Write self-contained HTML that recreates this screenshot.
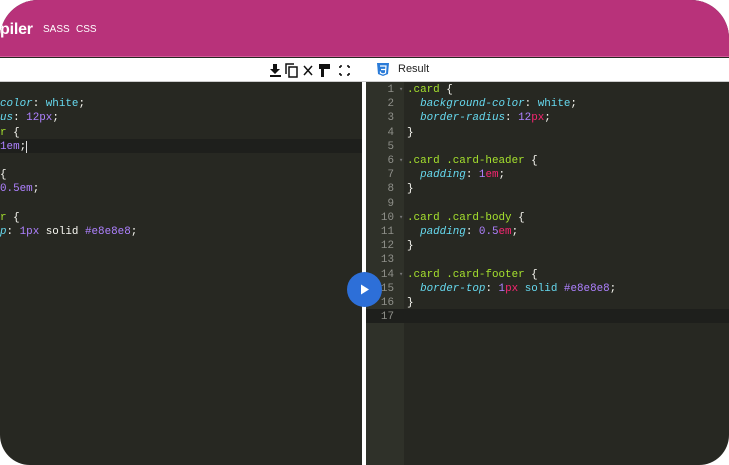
<!DOCTYPE html>
<html><head><style>
*{margin:0;padding:0;box-sizing:border-box}
html,body{width:729px;height:465px;background:#fff;overflow:hidden}
#frame{position:absolute;left:0;top:0;width:729px;height:465px;border-radius:38px 38px 30px 30px;overflow:hidden;background:#272822}
#hdr{position:absolute;left:0;top:0;width:729px;height:57px;background:#b8327a;border-bottom:1px solid #d45a9a;font-family:"Liberation Sans",sans-serif;color:#fff}
#tb{position:absolute;left:0;top:58px;width:729px;height:24px;background:#fff;border-bottom:1px solid #ccc}
.code{font-family:"Liberation Mono",monospace;font-size:10.9px;line-height:14.2px;white-space:pre;color:#f8f8f2}
.ln{position:absolute;height:14.2px}
.p{color:#66d9ef;font-style:italic}.v{color:#66d9ef}.n{color:#ae81ff}.u{color:#f92672}.s{color:#a6e22e}
#div{position:absolute;left:362px;top:82px;width:4px;height:383px;background:#fff}
#gut{position:absolute;left:366px;top:82px;width:38px;height:383px;background:#2f3129}
.g{position:absolute;right:0;width:38px;text-align:right;padding-right:10px;color:#8f908a}
.f{position:absolute;left:33px;color:#777;font-size:7px}
</style></head><body>
<div id="frame">
<div id="hdr">
 <div style="position:absolute;left:0;top:21px;font-size:16px;letter-spacing:-0.2px;font-weight:bold">piler</div>
 <div style="position:absolute;left:43px;top:24px;font-size:10px">SASS</div>
 <div style="position:absolute;left:76px;top:24px;font-size:10px">CSS</div>
</div>
<div id="tb">
 <svg style="position:absolute;left:270px;top:4px" width="82" height="16" viewBox="0 0 82 16">
  <path d="M3 2h4v5h3l-5 5-5-5h3z" fill="#111"/><rect x="0" y="13" width="11" height="2" fill="#111"/>
  <path d="M16 12V2h8" stroke="#111" stroke-width="1.5" fill="none"/><rect x="19" y="5" width="8" height="10" stroke="#111" stroke-width="1.5" fill="none"/>
  <path d="M34 4l8 9M42 4l-8 9" stroke="#111" stroke-width="1.5"/>
  <path d="M49 2h11v5h-6v8h-3v-8h-2z" fill="#111"/><rect x="57" y="5" width="3" height="2" fill="#111"/>
  <path d="M70 4h2M70 4v2M77 4h2M79 4v2M70 13h2M70 11v2M77 13h2M79 11v2" stroke="#111" stroke-width="1.6"/>
 </svg>
 <svg style="position:absolute;left:377px;top:5px" width="12" height="13" viewBox="0 0 12 13"><path d="M0 0h12l-1 11-5 2-5-2z" fill="#2a7bd8"/><path d="M3 3h6l-.5 7-2.5 1-2.5-1-.1-1.5M4 6.5h4.5" stroke="#fff" stroke-width="1.2" fill="none"/></svg>
 <div style="position:absolute;left:398px;top:5px;font-family:'Liberation Sans',sans-serif;font-size:11px;color:#222">Result</div>
</div>
<div style="position:absolute;left:0;top:138.8px;width:362px;height:14.2px;background:#1e1f1c"></div>
<div class="code" style="position:absolute;left:0;top:83px">
<div class="ln" style="top:14.2px"><span class="p">color</span>: <span class="v">white</span>;</div>
<div class="ln" style="top:28.4px"><span class="p">us</span>: <span class="n">12px</span>;</div>
<div class="ln" style="top:42.6px"><span class="s">r</span> {</div>
<div class="ln" style="top:56.8px"><span class="n">1em</span>;<span style="border-left:1px solid #ddd"></span></div>
<div class="ln" style="top:85.2px">{</div>
<div class="ln" style="top:99.4px"><span class="n">0.5em</span>;</div>
<div class="ln" style="top:127.8px"><span class="s">r</span> {</div>
<div class="ln" style="top:142px"><span class="p">p</span>: <span class="n">1px</span> solid <span class="n">#e8e8e8</span>;</div>
</div>
<div id="div"></div>
<div id="gut"></div>
<div style="position:absolute;left:366px;top:309.2px;width:363px;height:14.2px;background:#1e1f1c"></div>
<div class="code" style="position:absolute;left:366px;top:83px;width:38px">
<div class="g" style="top:0">1</div><div class="f" style="top:0">▾</div>
<div class="g" style="top:14.2px">2</div><div class="g" style="top:28.4px">3</div><div class="g" style="top:42.6px">4</div><div class="g" style="top:56.8px">5</div>
<div class="g" style="top:71px">6</div><div class="f" style="top:71px">▾</div>
<div class="g" style="top:85.2px">7</div><div class="g" style="top:99.4px">8</div><div class="g" style="top:113.6px">9</div>
<div class="g" style="top:127.8px">10</div><div class="f" style="top:127.8px">▾</div>
<div class="g" style="top:142px">11</div><div class="g" style="top:156.2px">12</div><div class="g" style="top:170.4px">13</div>
<div class="g" style="top:184.6px">14</div><div class="f" style="top:184.6px">▾</div>
<div class="g" style="top:198.8px">15</div><div class="g" style="top:213px">16</div><div class="g" style="top:227.2px">17</div>
</div>
<div class="code" style="position:absolute;left:407px;top:83px">
<div class="ln" style="top:0"><span class="s">.card</span> {</div>
<div class="ln" style="top:14.2px">  <span class="p">background-color</span>: <span class="v">white</span>;</div>
<div class="ln" style="top:28.4px">  <span class="p">border-radius</span>: <span class="n">12</span><span class="u">px</span>;</div>
<div class="ln" style="top:42.6px">}</div>
<div class="ln" style="top:71px"><span class="s">.card .card-header</span> {</div>
<div class="ln" style="top:85.2px">  <span class="p">padding</span>: <span class="n">1</span><span class="u">em</span>;</div>
<div class="ln" style="top:99.4px">}</div>
<div class="ln" style="top:127.8px"><span class="s">.card .card-body</span> {</div>
<div class="ln" style="top:142px">  <span class="p">padding</span>: <span class="n">0.5</span><span class="u">em</span>;</div>
<div class="ln" style="top:156.2px">}</div>
<div class="ln" style="top:184.6px"><span class="s">.card .card-footer</span> {</div>
<div class="ln" style="top:198.8px">  <span class="p">border-top</span>: <span class="n">1</span><span class="u">px</span> <span class="v">solid</span> <span class="n">#e8e8e8</span>;</div>
<div class="ln" style="top:213px">}</div>
</div>
<div style="position:absolute;left:347px;top:272px;width:35px;height:35px;border-radius:50%;background:#2d6fd8"></div>
<svg style="position:absolute;left:347px;top:272px" width="35" height="35"><path d="M14 12.5v10l8-5z" fill="#fff"/></svg>
</div>
</body></html>
